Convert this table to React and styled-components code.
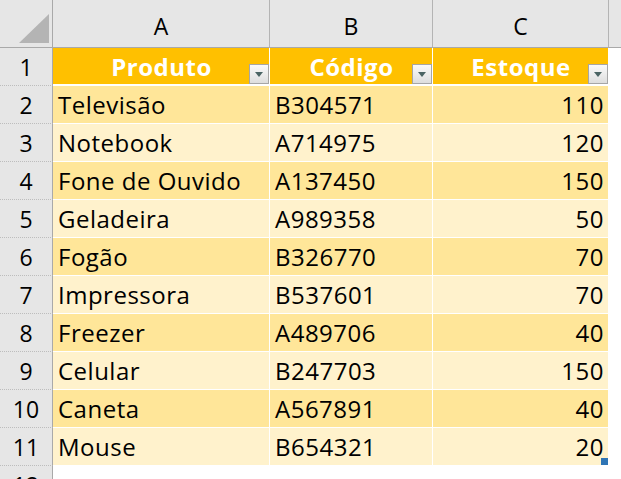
import React from 'react';
import styled, { createGlobalStyle } from 'styled-components';

const GlobalStyle = createGlobalStyle`
    html, body {
        margin: 0;
        padding: 0;
        background: #ffffff;
        overflow: hidden;
    }
    body {
        font-family: "Open Sans", Lato, sans-serif;
    }
`;

const rows = [
    ['Televisão', 'B304571', 110],
    ['Notebook', 'A714975', 120],
    ['Fone de Ouvido', 'A137450', 150],
    ['Geladeira', 'A989358', 50],
    ['Fogão', 'B326770', 70],
    ['Impressora', 'B537601', 70],
    ['Freezer', 'A489706', 40],
    ['Celular', 'B247703', 150],
    ['Caneta', 'A567891', 40],
    ['Mouse', 'B654321', 20]
];

const Sheet = styled.div`
    display: grid;
    grid-template-columns: 53px 217px 163px 176px 1fr;
    grid-template-rows: 48px repeat(12, 38px);
    width: 621px;
    height: 479px;
    overflow: hidden;
    font-size: 24px;
    color: #000;
`;

const Corner = styled.div`
    background: #e6e6e6;
    border-right: 1px solid #a9a9a9;
    border-bottom: 1px solid #a9a9a9;
    box-sizing: border-box;
    display: flex;
    align-items: flex-end;
    justify-content: flex-end;
    padding: 0 3px 4px 0;
`;

const ColHead = styled.div`
    background: #e6e6e6;
    border-right: ${p => (p.$last ? 'none' : '1px solid #b4b4b4')};
    border-bottom: 1px solid #a9a9a9;
    box-sizing: border-box;
    display: flex;
    align-items: center;
    justify-content: center;
    padding-top: 5px;
    font-size: 23px;
`;

const RowHead = styled.div`
    background: #e6e6e6;
    border-right: 1px solid #a9a9a9;
    border-bottom: 1px dotted #bdbdbd;
    box-sizing: border-box;
    display: flex;
    align-items: center;
    justify-content: center;
    font-size: 23px;
`;

const bandColor = { head: '#ffc000', dark: '#ffe699', light: '#fff2cc' };

const Cell = styled.div`
    position: relative;
    background: ${p => bandColor[p.$band]};
    border-right: 1px solid #ffffff;
    border-bottom: ${p => (p.$band === 'head' ? '2px' : '1px')} solid #ffffff;
    box-sizing: border-box;
    display: flex;
    align-items: center;
    justify-content: ${p => (p.$align === 'right' ? 'flex-end' : p.$align === 'center' ? 'center' : 'flex-start')};
    padding: 0 4px 0 5px;
    white-space: nowrap;
    letter-spacing: 0.5px;
    font-weight: ${p => (p.$band === 'head' ? 700 : 400)};
    color: ${p => (p.$band === 'head' ? '#ffffff' : '#000000')};
`;

const Blank = styled.div`
    background: #ffffff;
`;

const FilterButton = styled.div`
    position: absolute;
    right: 0;
    bottom: 0;
    width: 20px;
    height: 20px;
    box-sizing: border-box;
    border: 1px solid #a6a6a6;
    background: linear-gradient(#fafafa, #dedede);
    display: flex;
    align-items: center;
    justify-content: center;
`;

const Handle = styled.div`
    position: absolute;
    right: 0;
    bottom: 0;
    width: 7px;
    height: 7px;
    background: #2f75b5;
`;

const SelectAll = () => (
    <svg width="30" height="29" viewBox="0 0 30 29">
        <polygon points="30,0 30,29 0,29" fill="#b4b4b4" />
    </svg>
);

const Caret = () => (
    <svg width="8" height="5" viewBox="0 0 8 5">
        <polygon points="0,0 8,0 4,5" fill="#4b6464" />
    </svg>
);

function HeadCell({ children }) {
    return (
        <Cell $band="head" $align="center">
            {children}
            <FilterButton><Caret /></FilterButton>
        </Cell>
    );
}

export default function App() {
    return (
        <>
            <GlobalStyle />
            <Sheet>
                <Corner><SelectAll /></Corner>
                <ColHead>A</ColHead>
                <ColHead>B</ColHead>
                <ColHead>C</ColHead>
                <ColHead $last />

                <RowHead>1</RowHead>
                <HeadCell>Produto</HeadCell>
                <HeadCell>Código</HeadCell>
                <HeadCell>Estoque</HeadCell>
                <Blank />

                {rows.map((r, i) => {
                    const band = i % 2 === 0 ? 'dark' : 'light';
                    const last = i === rows.length - 1;
                    return (
                        <React.Fragment key={r[1]}>
                            <RowHead>{i + 2}</RowHead>
                            <Cell $band={band}>{r[0]}</Cell>
                            <Cell $band={band}>{r[1]}</Cell>
                            <Cell $band={band} $align="right">
                                {r[2]}
                                {last && <Handle />}
                            </Cell>
                            <Blank />
                        </React.Fragment>
                    );
                })}

                <RowHead>12</RowHead>
                <Blank />
                <Blank />
                <Blank />
                <Blank />
            </Sheet>
        </>
    );
}
